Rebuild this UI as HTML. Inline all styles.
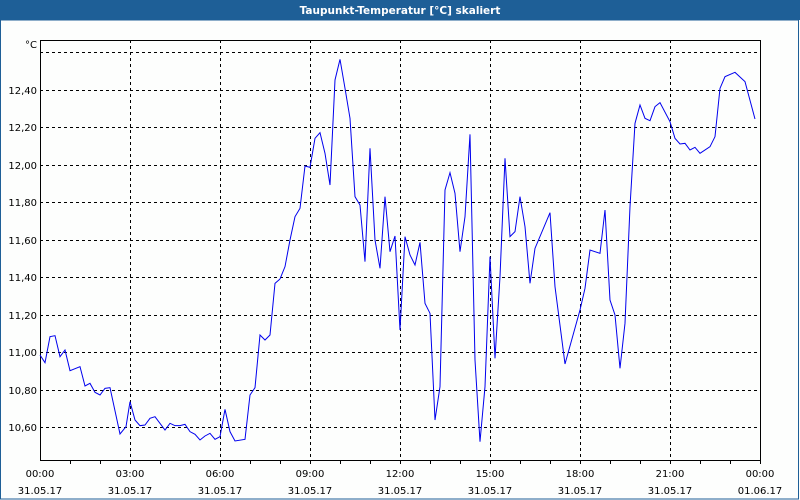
<!DOCTYPE html>
<html><head><meta charset="utf-8"><style>
html,body{margin:0;padding:0;background:#fff;}
body{width:800px;height:500px;overflow:hidden;position:relative;font-family:"DejaVu Sans","Liberation Sans",sans-serif;}
</style></head><body>
<svg width="800" height="500" xmlns="http://www.w3.org/2000/svg" style="position:absolute;left:0;top:0">
<rect x="0" y="0" width="800" height="500" fill="#fdfefd"/>
<rect x="0" y="0" width="800" height="20" fill="#1e5f97"/>
<rect x="0.5" y="20" width="798" height="479" fill="none" stroke="#1e5f97" stroke-width="1"/>
<text x="400" y="14" fill="#fff" font-size="10.5" font-weight="bold" text-anchor="middle" font-family="DejaVu Sans, Liberation Sans, sans-serif">Taupunkt-Temperatur [°C] skaliert</text>
<g stroke="#000" stroke-width="1" stroke-dasharray="3,3">
<line x1="40" x2="760" y1="52.5" y2="52.5"/>
<line x1="40" x2="760" y1="90.5" y2="90.5"/>
<line x1="40" x2="760" y1="127.5" y2="127.5"/>
<line x1="40" x2="760" y1="165.5" y2="165.5"/>
<line x1="40" x2="760" y1="202.5" y2="202.5"/>
<line x1="40" x2="760" y1="240.5" y2="240.5"/>
<line x1="40" x2="760" y1="277.5" y2="277.5"/>
<line x1="40" x2="760" y1="315.5" y2="315.5"/>
<line x1="40" x2="760" y1="352.5" y2="352.5"/>
<line x1="40" x2="760" y1="390.5" y2="390.5"/>
<line x1="40" x2="760" y1="427.5" y2="427.5"/>
<line y1="40" y2="460" x1="130.5" x2="130.5"/>
<line y1="40" y2="460" x1="220.5" x2="220.5"/>
<line y1="40" y2="460" x1="310.5" x2="310.5"/>
<line y1="40" y2="460" x1="400.5" x2="400.5"/>
<line y1="40" y2="460" x1="490.5" x2="490.5"/>
<line y1="40" y2="460" x1="580.5" x2="580.5"/>
<line y1="40" y2="460" x1="670.5" x2="670.5"/>
</g>
<rect x="40.5" y="40.5" width="720" height="420" fill="none" stroke="#000" stroke-width="1"/>
<g stroke="#000" stroke-width="1">
<line x1="70.5" x2="70.5" y1="460" y2="464"/><line x1="100.5" x2="100.5" y1="460" y2="464"/><line x1="130.5" x2="130.5" y1="460" y2="464"/><line x1="160.5" x2="160.5" y1="460" y2="464"/><line x1="190.5" x2="190.5" y1="460" y2="464"/><line x1="220.5" x2="220.5" y1="460" y2="464"/><line x1="250.5" x2="250.5" y1="460" y2="464"/><line x1="280.5" x2="280.5" y1="460" y2="464"/><line x1="310.5" x2="310.5" y1="460" y2="464"/><line x1="340.5" x2="340.5" y1="460" y2="464"/><line x1="370.5" x2="370.5" y1="460" y2="464"/><line x1="400.5" x2="400.5" y1="460" y2="464"/><line x1="430.5" x2="430.5" y1="460" y2="464"/><line x1="460.5" x2="460.5" y1="460" y2="464"/><line x1="490.5" x2="490.5" y1="460" y2="464"/><line x1="520.5" x2="520.5" y1="460" y2="464"/><line x1="550.5" x2="550.5" y1="460" y2="464"/><line x1="580.5" x2="580.5" y1="460" y2="464"/><line x1="610.5" x2="610.5" y1="460" y2="464"/><line x1="640.5" x2="640.5" y1="460" y2="464"/><line x1="670.5" x2="670.5" y1="460" y2="464"/><line x1="700.5" x2="700.5" y1="460" y2="464"/><line x1="730.5" x2="730.5" y1="460" y2="464"/><line x1="760.5" x2="760.5" y1="460" y2="464"/>
</g>
<g font-size="10" fill="#000" text-anchor="end">
<text x="37" y="48">°C</text>
<text x="37" y="94">12,40</text>
<text x="37" y="131">12,20</text>
<text x="37" y="169">12,00</text>
<text x="37" y="206">11,80</text>
<text x="37" y="244">11,60</text>
<text x="37" y="281">11,40</text>
<text x="37" y="319">11,20</text>
<text x="37" y="356">11,00</text>
<text x="37" y="394">10,80</text>
<text x="37" y="431">10,60</text>
</g>
<g font-size="10" fill="#000" text-anchor="middle">
<text x="40" y="477">00:00</text><text x="40" y="494">31.05.17</text>
<text x="130" y="477">03:00</text><text x="130" y="494">31.05.17</text>
<text x="220" y="477">06:00</text><text x="220" y="494">31.05.17</text>
<text x="310" y="477">09:00</text><text x="310" y="494">31.05.17</text>
<text x="400" y="477">12:00</text><text x="400" y="494">31.05.17</text>
<text x="490" y="477">15:00</text><text x="490" y="494">31.05.17</text>
<text x="580" y="477">18:00</text><text x="580" y="494">31.05.17</text>
<text x="670" y="477">21:00</text><text x="670" y="494">31.05.17</text>
<text x="760" y="477">00:00</text><text x="760" y="494">01.06.17</text>
</g>
<g fill="none" stroke="#0000ee" stroke-width="1">
<polyline transform="translate(40,40) scale(0.33333)" vector-effect="non-scaling-stroke" points="0,945 15,968 30,890 45,887 60,950 75,930 90,992 120,980 135,1038 150,1030 165,1057 180,1065 195,1045 210,1043 240,1182 258,1160 270,1085 285,1140 300,1157 315,1155 330,1135 345,1130 375,1170 390,1150 405,1157 420,1157 435,1153 450,1175 465,1183 480,1200 495,1188 510,1180 525,1198 540,1190 555,1108 570,1175 585,1203 615,1198 630,1065 645,1043 660,885 675,900 690,885 705,730 720,717"/>
<polyline transform="translate(280,40) scale(0.33333)" vector-effect="non-scaling-stroke" points="0,717 15,680 30,600 45,530 60,505 75,378 90,382 105,295 120,278 135,340 150,435 165,120 180,58 195,145 210,235 225,470 240,495 255,665 270,325 285,600 300,685 315,470 330,635 345,588 360,870 375,590 390,645 405,675 420,607 435,790 450,820 465,1140 480,1040 495,450 510,398 525,460 540,635 555,530 570,283 585,960 600,1205 615,1040 630,650 645,955 660,710 675,355 690,590 705,575 720,470"/>
<polyline transform="translate(520,40) scale(0.33333)" vector-effect="non-scaling-stroke" points="0,470 15,560 30,730 45,625 90,518 105,740 135,972 180,810 195,745 210,630 240,640 255,510 270,780 285,825 300,985 315,850 330,500 345,250 360,195 375,235 390,242 405,200 420,188 450,245 465,295 480,312 495,310 510,330 525,322 540,340 570,320 585,290 600,145 615,110 645,97 675,125 705,237"/>
</g>
</svg>
</body></html>
